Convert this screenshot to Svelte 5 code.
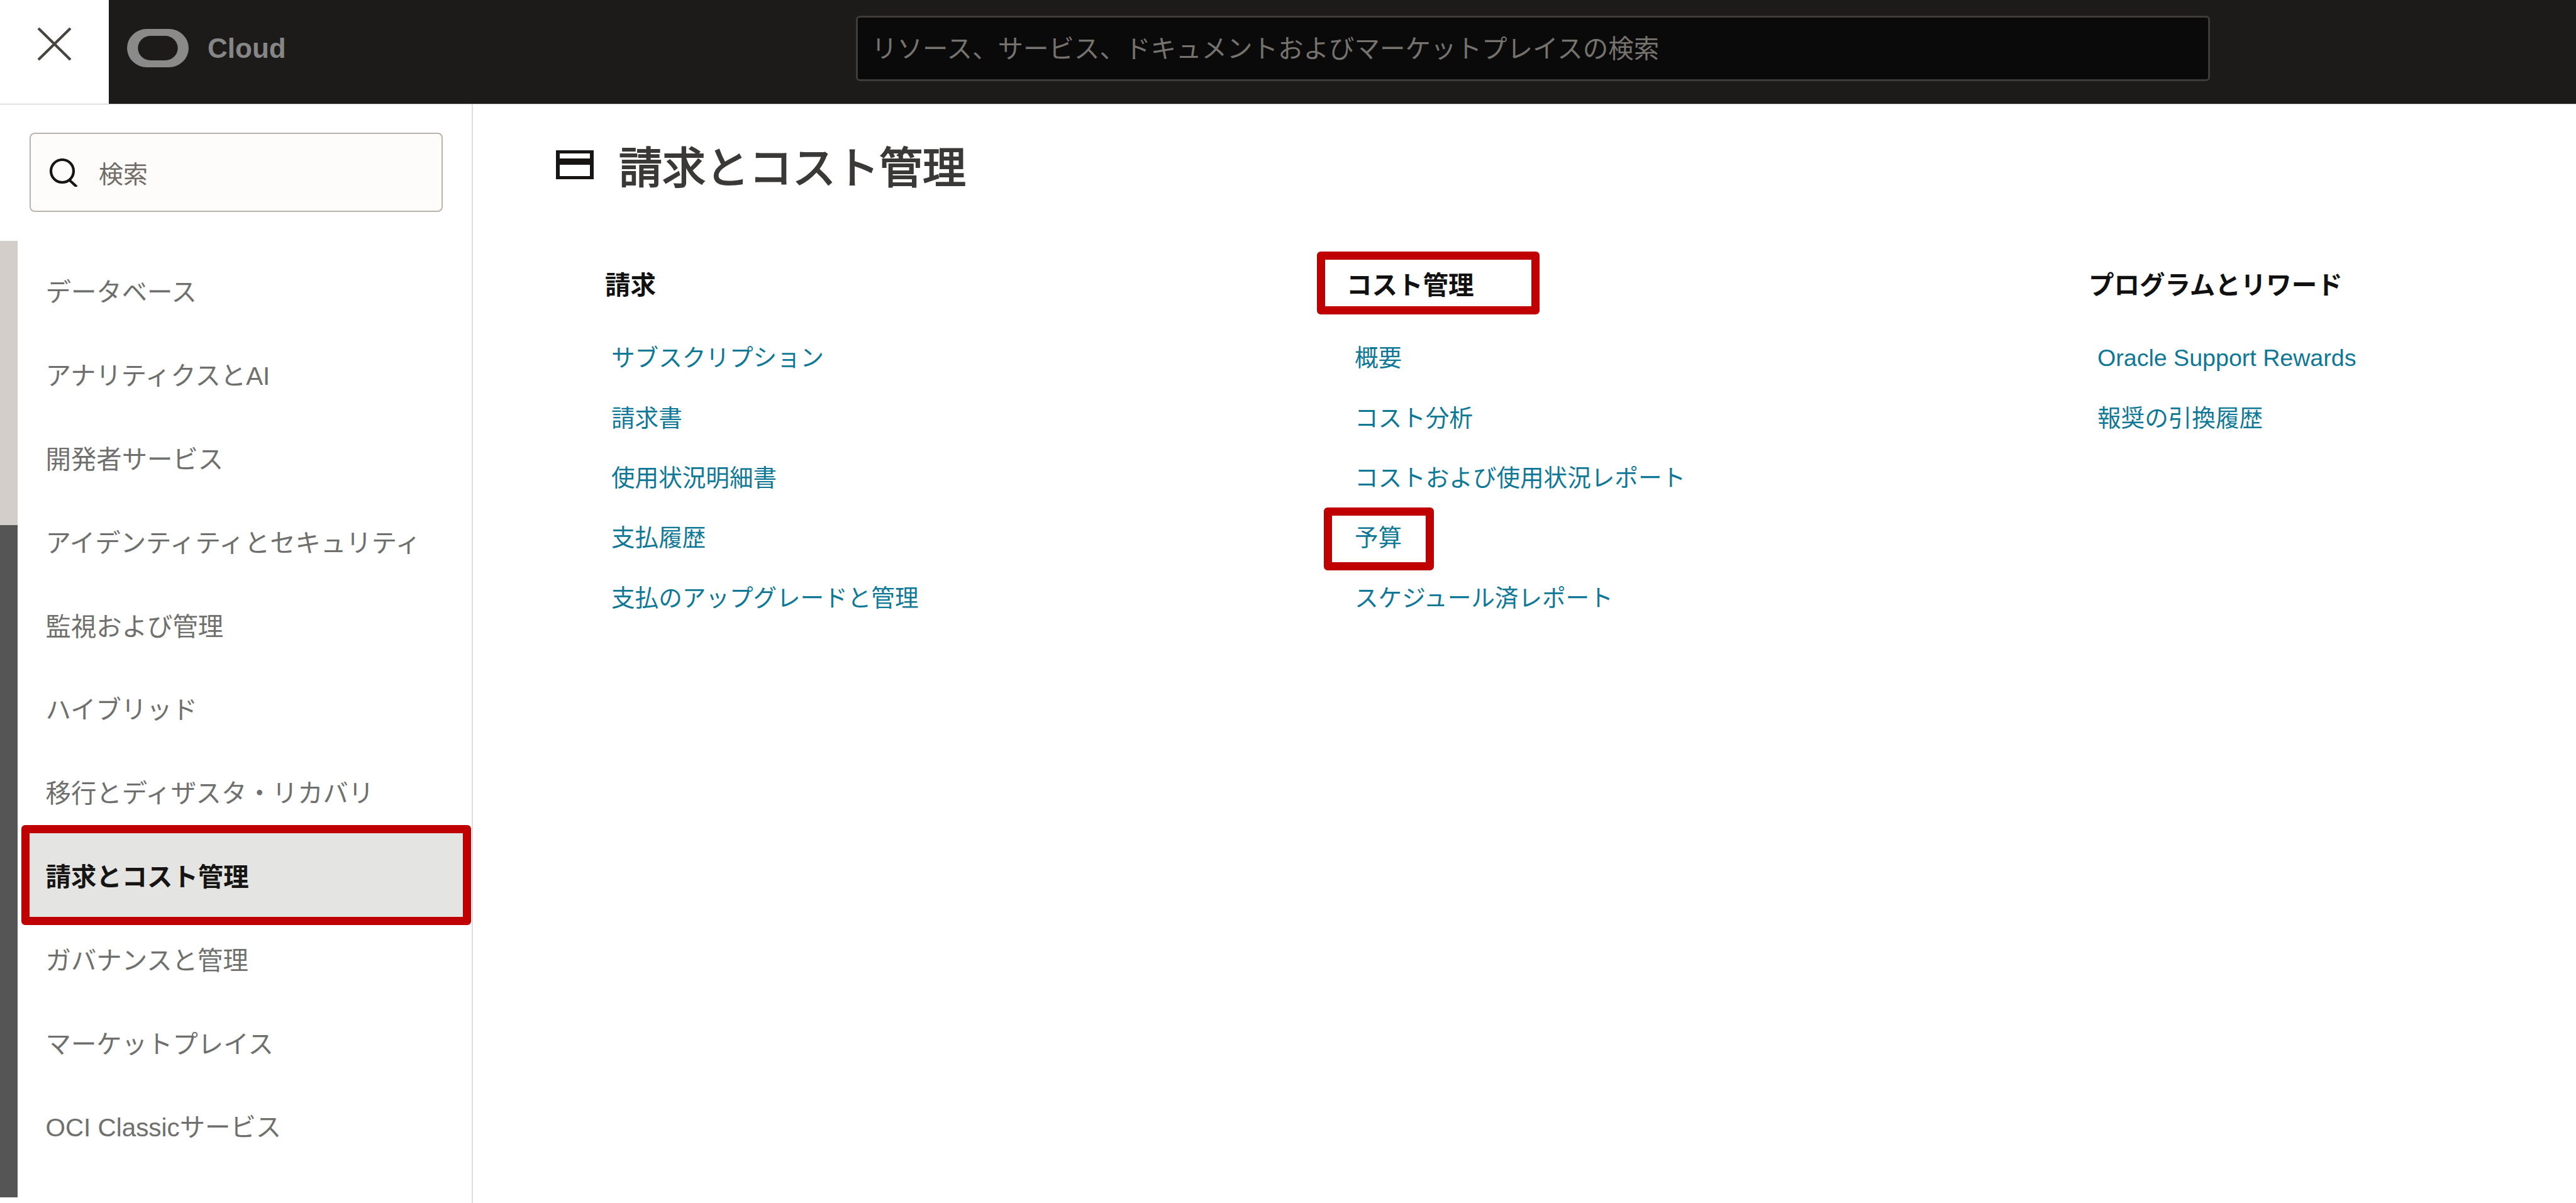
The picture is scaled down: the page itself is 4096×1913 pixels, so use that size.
<script>
  const nav = [
    'データベース',
    'アナリティクスとAI',
    '開発者サービス',
    'アイデンティティとセキュリティ',
    '監視および管理',
    'ハイブリッド',
    '移行とディザスタ・リカバリ',
    '請求とコスト管理',
    'ガバナンスと管理',
    'マーケットプレイス',
    'OCI Classicサービス',
  ]
  const activeNav = '請求とコスト管理'

  const columns = [
    {
      title: '請求',
      links: ['サブスクリプション', '請求書', '使用状況明細書', '支払履歴', '支払のアップグレードと管理'],
    },
    {
      title: 'コスト管理',
      marked: true,
      links: ['概要', 'コスト分析', 'コストおよび使用状況レポート', '予算', 'スケジュール済レポート'],
    },
    {
      title: 'プログラムとリワード',
      links: ['Oracle Support Rewards', '報奨の引換履歴'],
    },
  ]
</script>

<div class="page">
  <header class="topbar">
    <button class="close" aria-label="閉じる">
      <svg width="55" height="54" viewBox="0 0 55 54">
        <path d="M2 2L53 52M53 2L2 52" fill="none" stroke="#47443f" stroke-width="4.2" />
      </svg>
    </button>
    <div class="brand">
      <svg class="logo" width="98" height="61" viewBox="0 0 102 66" preserveAspectRatio="none">
        <path
          fill="#8a8a8a"
          fill-rule="evenodd"
          d="M33 0H69A33 33 0 0 1 69 66H33A33 33 0 0 1 33 0ZM39 12A21 21 0 0 0 39 54H63A21 21 0 0 0 63 12Z"
        />
      </svg>
      <span class="cloud">Cloud</span>
    </div>
    <div class="global-search">リソース、サービス、ドキュメントおよびマーケットプレイスの検索</div>
  </header>

  <div class="body">
    <aside class="sidebar">
      <div class="side-search">
        <svg width="46" height="45" viewBox="0 0 46 45">
          <circle cx="21" cy="20" r="18" fill="none" stroke="#161513" stroke-width="4.2" />
          <path d="M32 34L44 45" stroke="#161513" stroke-width="4.2" fill="none" />
        </svg>
        <span>検索</span>
      </div>
      <div class="nav-wrap">
        <div class="scrollbar">
          <div class="track"></div>
          <div class="thumb"></div>
        </div>
        <nav>
          {#each nav as item}
            <div class="nav-item" class:active={item === activeNav}>
              {#if item === activeNav}<i class="mark"></i>{/if}
              <span>{item}</span>
            </div>
          {/each}
        </nav>
      </div>
    </aside>

    <main>
      <div class="title">
        <svg width="60" height="46" viewBox="0 0 60 46">
          <path
            fill="#161513"
            fill-rule="evenodd"
            d="M0 0H60V46H0ZM6 5V13H54V5ZM6 23V41H54V23Z"
          />
        </svg>
        <h1>請求とコスト管理</h1>
      </div>
      <div class="columns">
        {#each columns as col}
          <section>
            <h2>
              {#if col.marked}<i class="mark heading-mark"></i>{/if}
              <span>{col.title}</span>
            </h2>
            {#each col.links as link}
              <div class="link">
                {#if link === '予算'}<i class="mark link-mark"></i>{/if}
                <span>{link}</span>
              </div>
            {/each}
          </section>
        {/each}
      </div>
    </main>
  </div>
</div>

<style>
  :global(body) {
    margin: 0;
    background: #fff;
  }

  .page {
    width: 4096px;
    height: 1913px;
    overflow: hidden;
    font-family: 'Liberation Sans', 'Noto Sans CJK JP', sans-serif;
    display: flex;
    flex-direction: column;
  }

  .topbar {
    height: 165px;
    display: flex;
    flex: none;
    background: #1c1b19;
    box-shadow: 0 1px 0 #c9c7c3;
    position: relative;
  }

  .close {
    width: 173px;
    height: 165px;
    background: #fff;
    border: 0;
    padding: 0 0 26px;
    display: flex;
    align-items: center;
    justify-content: center;
  }

  .brand {
    width: 1188px;
    display: flex;
    align-items: center;
    padding: 0 0 12px 29px;
    box-sizing: border-box;
    gap: 30px;
  }

  .cloud {
    color: #868686;
    font-size: 44px;
    font-weight: 700;
    font-family: 'Liberation Sans', sans-serif;
  }

  .global-search {
    width: 2153px;
    height: 104px;
    margin-top: 25px;
    box-sizing: border-box;
    border: 3px solid #3d3c3a;
    border-radius: 6px;
    background: #0a0a0a;
    color: #76736f;
    font-size: 40.5px;
    line-height: 100px;
    padding-left: 22px;
  }

  .body {
    flex: 1;
    display: flex;
    min-height: 0;
  }

  .sidebar {
    width: 752px;
    flex: none;
    box-sizing: border-box;
    border-right: 2px solid #dedddb;
    padding-top: 46px;
  }

  .side-search {
    width: 657px;
    height: 126px;
    margin-left: 47px;
    box-sizing: border-box;
    border: 2px solid #b9b4ae;
    border-radius: 8px;
    background: #fdfcfa;
    display: flex;
    align-items: center;
    padding-left: 29px;
    gap: 33px;
    color: #6f6b66;
    font-size: 39px;
  }

  .nav-wrap {
    display: flex;
    margin-top: 46px;
  }

  .scrollbar {
    width: 28px;
    flex: none;
    display: flex;
    flex-direction: column;
  }

  .track {
    height: 452px;
    background: #d3cec9;
  }

  .thumb {
    height: 1069px;
    background: #555;
  }

  nav {
    flex: 1;
    padding-top: 12.6px;
  }

  .nav-item {
    height: 132.8px;
    display: flex;
    align-items: center;
    padding-left: 44.5px;
    color: #6f6f6d;
    font-size: 40.4px;
    position: relative;
  }

  .nav-item span,
  h2 span,
  .link span {
    position: relative;
    z-index: 1;
  }

  .nav-item.active {
    color: #161513;
    font-weight: 700;
  }

  .mark {
    position: absolute;
    box-sizing: border-box;
    border: 13px solid #c00000;
    border-radius: 6px;
  }

  .nav-item .mark {
    left: 5.5px;
    right: 1px;
    top: -13px;
    bottom: -13px;
    background: #e4e4e2;
  }

  main {
    flex: 1;
    padding-top: 47px;
  }

  .title {
    height: 100px;
    display: flex;
    align-items: center;
    gap: 40px;
    margin-left: 132px;
  }

  h1 {
    margin: 0;
    font-size: 69px;
    font-weight: 400;
    -webkit-text-stroke: 2px #3a3937;
    color: #3a3937;
  }

  .columns {
    display: grid;
    grid-template-columns: 1181px 1176px 1fr;
    padding-left: 210px;
    margin-top: 110px;
  }

  h2 {
    margin: 0 0 40.4px;
    height: 60px;
    line-height: 64px;
    font-size: 40.5px;
    font-weight: 700;
    color: #111;
    position: relative;
  }

  .heading-mark {
    left: -49px;
    width: 354px;
    top: -22px;
    height: 100px;
  }

  section:nth-child(2) h2 span {
    margin-left: -2px;
  }

  section:nth-child(3) h2 span {
    margin-left: 2px;
  }

  .link {
    height: 95.3px;
    line-height: 95.3px;
    padding-left: 10px;
    font-size: 37.6px;
    color: #0f7896;
    position: relative;
  }

  section:nth-child(2) .link {
    padding-left: 11px;
  }

  section:nth-child(3) .link {
    padding-left: 16px;
  }

  .link-mark {
    left: -38px;
    width: 175px;
    top: -1px;
    height: 100px;
  }
</style>
